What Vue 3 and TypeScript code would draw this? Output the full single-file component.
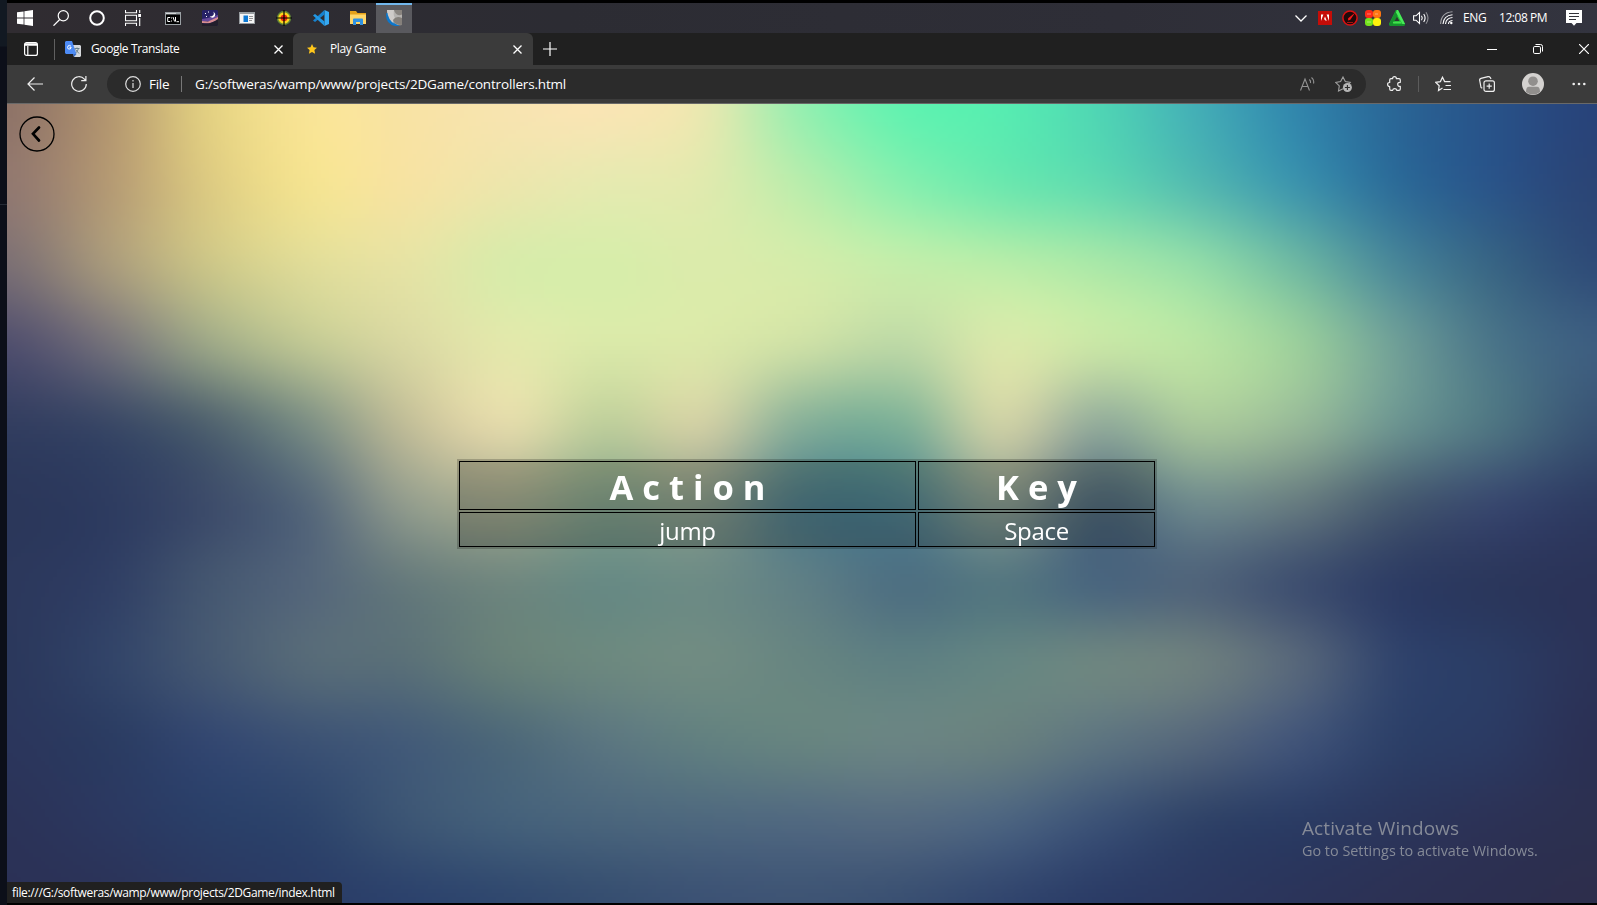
<script setup lang="ts">
import { onMounted, ref } from 'vue'

interface Binding {
  action: string
  key: string
}

const bindings: Binding[] = [{ action: 'jump', key: 'Space' }]

// Colour mesh of the wallpaper: 11 rows of 17 evenly spaced points.
const mesh: string[] = [
  '8f7468 b3966f e3d082 f9e496 f8e3a4 f8e4b0 fae5b4 e9e8b0 96efb0 63f2b0 57edb1 4fd5b4 43aeb6 3186ac 2a6696 285288 28437a',
  '927970 b49a74 dcca82 f4e391 f6e3a2 ede6ac e6eab0 e0eaae b9edac 8aefae 6ee8ae 62d9b0 54bab0 3d94ac 2d6c98 2a5488 2b4576',
  '7c7074 a89a7c cbc588 e0dc98 e6e3a4 d9ebaa d7edaa dbebab d4ecaa c4edaa b9eda9 a9e8a8 93dca8 6fb8a2 4a8798 386484 2f4c78',
  '51506e 74727a 9ca687 c0c794 d9d8a2 e3e8ab dae9a9 dbe8a9 cde0a6 bdd9a6 d9e8aa c8e6a6 b9e4a3 9bce9c 6f9f97 4a7488 3d5e80',
  '333e60 3a4866 50626f 7c8e84 c0bd98 e2daaa bfcf9c cfcfa4 88b099 80b198 ccd0a5 94ad9b a8c79b 96b898 6c9490 4e7482 395374',
  '2b375a 2e3c60 3d4c6a 56687a 929c8d a4ab90 88a48d 8c9f8e 55828c 55858f 8a9e92 56707f 6f8a8c 667b80 465a70 38486e 2e3c62',
  '2c385c 303f64 445670 54667a 667a7c 70877f 688a84 6d8b85 5f7f85 4e7082 557780 4a667e 50647a 3f5070 2e3d64 2b375c 2b3358',
  '2b385c 324468 455872 566a78 5a7078 678079 6c887f 708b82 678581 5f8082 658582 6d8580 6c7e7e 56667a 31446c 2b3c64 2b3358',
  '2b365c 2b3c62 334770 3c5274 435b78 4d6879 5b7680 628080 678480 6a8483 68807f 5d7480 54667b 415478 2d4068 2b3a62 2b3054',
  '2b3358 2b3860 2a3f68 2e456c 3c5574 44607a 4a657c 4e687e 516980 546a80 4c6480 3c5276 304368 2b3c64 2b365c 2c3256 2c3050',
  '2b3156 2b3358 2b3860 2a3c66 2c426c 30486e 364e70 3c5274 3e5474 3a5072 32466e 2b3c66 2b3860 2b345a 2c3154 2c2f50 2d2e4c',
]

const wallpaper = ref<HTMLCanvasElement | null>(null)

// Cubic weights that pass through the mesh points.
function weights(t: number): number[] {
  const t2 = t * t
  const t3 = t2 * t
  return [
    (-t3 + 2 * t2 - t) / 2,
    (3 * t3 - 5 * t2 + 2) / 2,
    (-3 * t3 + 4 * t2 + t) / 2,
    (t3 - t2) / 2,
  ]
}

onMounted(() => {
  const canvas = wallpaper.value
  const ctx = canvas?.getContext('2d')
  if (!canvas || !ctx) return
  const points = mesh.map((row) =>
    row.split(' ').map((hex) => [0, 2, 4].map((i) => parseInt(hex.slice(i, i + 2), 16))),
  )
  const rows = points.length
  const cols = points[0].length
  const clamp = (n: number, max: number) => Math.max(0, Math.min(max, n))
  const image = ctx.createImageData(canvas.width, canvas.height)
  for (let y = 0; y < canvas.height; y++) {
    const gy = (y / (canvas.height - 1)) * (rows - 1)
    const iy = Math.min(Math.floor(gy), rows - 2)
    const wy = weights(gy - iy)
    for (let x = 0; x < canvas.width; x++) {
      const gx = (x / (canvas.width - 1)) * (cols - 1)
      const ix = Math.min(Math.floor(gx), cols - 2)
      const wx = weights(gx - ix)
      const sum = [0, 0, 0]
      for (let j = 0; j < 4; j++) {
        const row = points[clamp(iy + j - 1, rows - 1)]
        for (let i = 0; i < 4; i++) {
          const p = row[clamp(ix + i - 1, cols - 1)]
          const w = wy[j] * wx[i]
          sum[0] += p[0] * w
          sum[1] += p[1] * w
          sum[2] += p[2] * w
        }
      }
      const o = (y * canvas.width + x) * 4
      image.data[o] = sum[0]
      image.data[o + 1] = sum[1]
      image.data[o + 2] = sum[2]
      image.data[o + 3] = 255
    }
  }
  ctx.putImageData(image, 0, 0)
})
</script>

<template>
  <div class="screen">
    <aside class="edge"></aside>
    <div class="desktop">
      <header class="taskbar">
        <div class="task sys">
          <svg width="16" height="16" viewBox="0 0 16 16" fill="#fff"><path d="M0 2.3 6.6 1.4V7.5H0zM7.4 1.2 16 0V7.5H7.4zM0 8.4H6.6V14.6L0 13.7zM7.4 8.4H16V16L7.4 14.8z" /></svg>
        </div>
        <div class="task sys">
          <svg width="16" height="16" viewBox="0 0 16 16" fill="none" stroke="#fff" stroke-width="1.2"><circle cx="10.3" cy="5.8" r="5.1" /><path d="M6.7 9.5.5 15.7" /></svg>
        </div>
        <div class="task sys">
          <svg width="16" height="16" viewBox="0 0 16 16" fill="none" stroke="#fff" stroke-width="2"><circle cx="8" cy="8" r="6.8" /></svg>
        </div>
        <div class="task sys">
          <svg width="16" height="16" viewBox="0 0 16 16" fill="none" stroke="#fff" stroke-width="1.1"><path d="M.5 0V2.8H11.5V0M.5 16V13.2H11.5V16M.5 5.2H11.5V10.8H.5zM14.7 0V3M14.7 8V16" /><path d="M13.2 4H16.200V7H13.200z" fill="#fff" stroke="none" /></svg>
        </div>
        <div class="task">
          <svg width="16" height="13" viewBox="0 0 16 13"><path d="M0 0H16V13H0z" fill="#9aa0a4" /><path d="M1 2.500H15V12H1z" fill="#000" /><path d="M1 1H11V2H1z" fill="#d4d7d9" /><path d="M5.200 5.500H2.700V9.500H5.200M6.500 5.500V6.500M6.500 8.500V9.500M8 5 9.600 9.500M10.500 5V9.500M11.500 9.700H14" fill="none" stroke="#fff" stroke-width="1" /></svg>
        </div>
        <div class="task">
          <svg width="16" height="16" viewBox="0 0 16 16"><path d="M1 0H15L16 1V15L15 16H1L0 15V1z" fill="#272266" /><path d="M0 9Q7 8 16 5V11H0z" fill="#65489a" /><path d="M0 11 6 11.500 16 7V10L7 13.500 0 13z" fill="#d78c91" /><path d="M0 16V13Q8 15 16 9V15L15 16z" fill="#211e2b" /><path d="M11.500 1.500Q13 6.500 7.500 6.500 11 9 13 6 13.800 3.500 11.500 1.500" fill="#fff" /><path d="M3 3H4V4H3zM6 1.500H7V2.500H6zM4 6H5V7H4z" fill="#fff" /></svg>
        </div>
        <div class="task">
          <svg width="16" height="12" viewBox="0 0 16 12"><path d="M0 0H16V12H0z" fill="#989da1" /><path d="M1 2H15V11H1z" fill="#f5f5f5" /><path d="M4.500 3.500H9V10H4.500z" fill="#0b78d4" /><path d="M10 4.500H14M10 6.500H14M10 8.500H13" stroke="#888" stroke-width=".9" /></svg>
        </div>
        <div class="task">
          <svg width="16" height="16" viewBox="0 0 16 16"><circle cx="8" cy="8" r="7.200" fill="#628735" /><circle cx="8" cy="8" r="5.800" fill="#ffd51b" /><circle cx="8" cy="8" r="3.300" fill="#ed2d13" /><path d="M8 0V16M0 8H16" stroke="#000" stroke-width="1.200" /></svg>
        </div>
        <div class="task">
          <svg width="16" height="16" viewBox="0 0 16 16"><path d="M11.500 0 16 2V14L11.500 16z" fill="#36a9f2" /><path d="M11.500 0V4.500L2 12 0 10.500z" fill="#1682cf" /><path d="M0 5.500 2 4 11.500 11.500V16z" fill="#2298e4" /></svg>
        </div>
        <div class="task">
          <svg width="16" height="14" viewBox="0 0 16 14"><path d="M0 0H6L7.500 2H16V13H0z" fill="#e5a21a" /><path d="M0 3.500H16V13H0z" fill="#ffd769" /><path d="M3 14V8.500Q3 7.500 4 7.500H12Q13 7.500 13 8.500V14H10V11H6V14z" fill="#3092e2" /></svg>
        </div>
        <div class="task active">
          <svg width="16" height="16" viewBox="0 0 16 16"><path d="M1 0H16V15Q4 17 1 8z" fill="#b5b2af" /><path d="M0 5Q0 14 9 16H14Q5 13 2 3 0 2 0 5" fill="#0d76ca" /><path d="M1 0H8Q7 5 9 8 5 11 9 14 2 11 1 0" fill="#cfcbc8" /><path d="M8 0H16V4.500Q10 7 8 0" fill="#89847f" /><path d="M7 10Q10 5.500 16 8V15Q8 15 7 10z" fill="#85807b" /></svg>
        </div>

        <div class="tray">
          <svg class="chev" width="12" height="7" viewBox="0 0 12 7" fill="none" stroke="#fff" stroke-width="1.300"><path d="m.5.5 5.500 5.500L11.500.5" /></svg>
          <svg class="adobe" width="14" height="14" viewBox="0 0 14 14"><path d="M0 0H14V14H0z" fill="#c50d08" /><path d="M3 10V3.500H5.400zM11 10V3.500H8.600zM7 5.500 8.700 9.800H7.600L7 8.400H5.900z" fill="#fff" /></svg>
          <svg class="gauge" width="16" height="16" viewBox="0 0 16 16"><circle cx="8" cy="8" r="7.100" fill="#21090a" stroke="#dc1010" stroke-width="1.500" /><path d="M13 2.800 8.300 9.800 6 10.500 6.200 8.200z" fill="#f71818" /><path d="M5 12.500H11" stroke="#a31212" /></svg>
          <svg class="quad" width="16" height="16" viewBox="0 0 16 16"><rect width="8" height="8" rx="3" fill="#fc2b19" /><rect x="8" width="8" height="8" rx="3" fill="#ff7612" /><rect y="8" width="8" height="8" rx="3" fill="#74e31c" /><rect x="8" y="8" width="8" height="8" rx="3" fill="#fff20c" /><path d="M2 4H6M10 4H13M2 12H6" stroke="#fff" stroke-opacity=".4" /></svg>
          <svg class="tri" width="16" height="16" viewBox="0 0 16 16"><path d="M7 0H9L16 14 15 16H1L0 14z" fill="#22bd37" /><path d="M7 0 0 14 1 16H15L16 14H4L9 5z" fill="#16912c" /><path d="M8 6.500 10.500 11H5.500z" fill="#2c3a31" /><path d="M8 0H9L16 14H13.500L7 2.500z" fill="#48eb58" /><path d="M4 12.500H12" stroke="#45df4e" stroke-width="1.500" /></svg>
          <svg class="speaker" width="16" height="14" viewBox="0 0 16 14" fill="none" stroke="#fff" stroke-width="1.100"><path d="M.6 4.800H3L6.500 1.500V12.500L3 9.200H.6z" /><path d="M8.500 4.800Q10 7 8.500 9.200M10.700 3Q13.500 7 10.700 11" /><path d="M13 1.200Q17 7 13 12.800" opacity=".45" /></svg>
          <svg class="wifi" width="13" height="14" viewBox="0 0 13 14" fill="none" stroke="#fff" stroke-width="1.100"><path d="M8.500 13Q8.500 10 12.500 9.500M5.500 13Q6 7 12.500 6.500M3 13Q3.500 4.500 12.500 3.700" /><path d="M.6 13Q1 1.500 12.500.7" opacity=".55" /><circle cx="11.300" cy="12" r="1.200" fill="#fff" stroke="none" /></svg>
          <span class="lang">ENG</span>
          <span class="clock">12:08 PM</span>
          <svg class="note" width="16" height="16" viewBox="0 0 16 16"><path d="M0 0H16V13H10.500L8 15.700 5.500 13H0z" fill="#fff" /><path d="M3 3.500H13M3 6.500H13M3 9.500H10" stroke="#33333a" stroke-width="1.100" /></svg>
        </div>
      </header>

      <nav class="tabs">
        <svg class="tabmenu" width="14" height="14" viewBox="0 0 14 14" fill="none" stroke="#fff" stroke-width="1.200"><rect x=".6" y=".6" width="12.800" height="12.800" rx="2" /><path d="M1 2.500H13" stroke-width="2.500" /><path d="M3.800 4V13" /></svg>
        <i class="vline"></i>
        <div class="tab first">
          <svg width="16" height="16" viewBox="0 0 16 16"><path d="M6 4H15L16 5V15L15 16H9z" fill="#d5d8dc" /><path d="M1 0H7L11.500 13H1L0 12V1z" fill="#4d8bf5" /><path d="M8 13H11.500L9 16z" fill="#3369c6" /><path d="M5.900 5.100Q4.500 3.800 3.200 4.800 1.900 6.500 3.200 7.900 5.800 9 6.200 6.300H4.500" fill="none" stroke="#fff" stroke-width="1" /><path d="M9.500 7.500H14.500M12 6.500V7.500M13.500 7.500Q12.500 11 10.500 12M10.500 8.500 14 12.500" fill="none" stroke="#607985" stroke-width=".9" /></svg>
          <span class="label">Google Translate</span>
          <svg class="x" width="9" height="9" viewBox="0 0 9 9" stroke="#fff" stroke-width="1.300"><path d="m.5.5 8 8M8.500.5l-8 8" /></svg>
        </div>
        <div class="tab current">
          <svg class="fav" width="10" height="10" viewBox="0 0 10 10"><path d="m5 0 1.500 3.200 3.500.5-2.600 2.400.7 3.600L5 8 1.900 9.700l.7-3.600L0 3.700l3.500-.5z" fill="#ffc71b" /></svg>
          <span class="label">Play Game</span>
          <svg class="x" width="9" height="9" viewBox="0 0 9 9" stroke="#fff" stroke-width="1.300"><path d="m.5.5 8 8M8.500.5l-8 8" /></svg>
        </div>
        <svg class="plus" width="14" height="14" viewBox="0 0 14 14" stroke="#fff" stroke-width="1.200"><path d="M7 0V14M0 7H14" /></svg>
        <div class="winctl">
          <svg width="10" height="10" viewBox="0 0 10 10" stroke="#fff"><path d="M0 5.500H10" /></svg>
          <svg width="10" height="10" viewBox="0 0 10 10" fill="none" stroke="#fff"><rect x=".5" y="2.500" width="7" height="7" rx="1.300" /><path d="M2.500.5H7.500Q9.500.5 9.500 2.500V7.500" /></svg>
          <svg width="10" height="10" viewBox="0 0 10 10" stroke="#fff" stroke-width="1.200"><path d="m0 0 10 10M10 0 0 10" /></svg>
        </div>
      </nav>

      <div class="toolbar">
        <svg class="back" width="16" height="14" viewBox="0 0 16 14" fill="none" stroke="#eee" stroke-width="1.200"><path d="M16 7H1M7.500.5 1 7l6.500 6.500" /></svg>
        <svg class="reload" width="16" height="16" viewBox="0 0 16 16" fill="none" stroke="#eee" stroke-width="1.200"><path d="M15.300 8A7.300 7.300 0 1 1 13.400 3.100L14.800 4.600M14.900 0V4.700H10.200" /></svg>
        <div class="omnibox">
          <svg class="info" width="16" height="16" viewBox="0 0 16 16" fill="none" stroke="#ddd" stroke-width="1.200"><circle cx="8" cy="8" r="7.300" /><path d="M8 7V12M8 4V5.500" /></svg>
          <span class="scheme">File</span>
          <i class="divider"></i>
          <span class="url">G:/softweras/wamp/www/projects/2DGame/controllers.html</span>
          <svg class="read" width="15" height="14" viewBox="0 0 15 14" fill="none" stroke="#929292" stroke-width="1.100"><path d="M.5 13.500 5 2 9.500 13.500M2 9.500H8M9.300 2.500Q11 4 10.400 6M11.500.5Q14.500 3 13.500 6.500" /></svg>
          <svg class="addfav" width="17" height="16" viewBox="0 0 17 16"><path d="M8 12.800 3.500 15 4.300 9.900.7 6.400 5.600 5.600 8 1 10.300 5.600 15.300 6.400 14 8" fill="none" stroke="#a0a0a0" stroke-width="1.100" /><circle cx="12.400" cy="11.500" r="4.500" fill="#b5b5b5" /><path d="M12.400 9V14M9.900 11.500H14.900" stroke="#2b2b2b" stroke-width="1.100" /></svg>
        </div>
        <svg class="puzzle" width="14" height="16" viewBox="0 0 14 16" fill="none" stroke="#eee" stroke-width="1.200" stroke-linejoin="round"><path d="M4 2.700H5.600Q5.600.7 7.500.7 9.400.7 9.400 2.700H12Q13.300 2.700 13.300 4V6.300Q10.700 6.200 10.700 8.300 10.700 10.500 13.300 10.300V13Q13.300 14.300 12 14.300H9.700Q9.500 12.600 7.700 12.600 5.900 12.600 5.700 14.300H4Q2.700 14.300 2.700 13V10.500Q.6 10.500.6 8.500.6 6.500 2.700 6.500V4Q2.700 2.700 4 2.700z" /></svg>
        <i class="divider short"></i>
        <svg class="favs" width="16" height="16" viewBox="0 0 16 16" fill="none" stroke="#eee" stroke-width="1.200"><path d="M7.500 12 3.500 14.500 4.200 9.700.7 6.300 5.400 5.600 7.500 1.200 9.600 5.600H15.500M10.500 9.500H16M8.500 13.500H16" /></svg>
        <svg class="coll" width="16" height="16" viewBox="0 0 16 16" fill="none" stroke="#eee" stroke-width="1.200"><rect x="5" y="4.800" width="10.400" height="10.600" rx="2" /><path d="M10.200 7.500V12.700M7.600 10.100H12.800M3.300 12.300 2 11.500.7 4.500Q.3 2.900 2 2.400L9 .7Q10.500.4 11.300 1.600L12 3" /></svg>
        <svg class="avatar" width="22" height="22" viewBox="0 0 22 22"><circle cx="11" cy="11" r="11" fill="#d4d2d0" /><circle cx="11" cy="8.200" r="4.800" fill="#918f8d" /><path d="M4 19Q4 13.800 7 13.800H15Q18 13.800 18 19 11 24 4 19" fill="#918f8d" /></svg>
        <svg class="dots" width="14" height="4" viewBox="0 0 14 4" fill="#eee"><circle cx="1.700" cy="2" r="1.300" /><circle cx="7" cy="2" r="1.300" /><circle cx="12.300" cy="2" r="1.300" /></svg>
      </div>

      <main class="page">
        <canvas ref="wallpaper" class="wallpaper" width="398" height="200"></canvas>
        <svg class="home" width="36" height="36" viewBox="0 0 36 36" fill="none" stroke="#000"><circle cx="18" cy="18" r="17" stroke-width="1.300" /><path d="M20 11.500 14 17.800 20 24.500" stroke-width="2.700" stroke-linecap="round" /></svg>
        <table class="keys">
          <thead>
            <tr><th class="wide">A c t i o n</th><th>K e y</th></tr>
          </thead>
          <tbody>
            <tr v-for="b in bindings" :key="b.action"><td>{{ b.action }}</td><td>{{ b.key }}</td></tr>
          </tbody>
        </table>
        <div class="watermark">
          <div class="big">Activate Windows</div>
          <div class="small">Go to Settings to activate Windows.</div>
        </div>
        <div class="status">file:///G:/softweras/wamp/www/projects/2DGame/index.html</div>
      </main>
    </div>
  </div>
</template>

<style>
body {
  margin: 0;
  background: #000;
  overflow: hidden;
}
</style>

<style scoped>
.screen {
  width: 1597px;
  height: 905px;
  display: flex;
  background: #000;
  overflow: hidden;
  font-family: 'Open Sans', 'Noto Sans', sans-serif;
  color: #fff;
}
svg,
span,
i {
  flex: none;
  display: block;
}
.edge {
  width: 7px;
  flex: none;
  background: linear-gradient(#121922 0 46px, #0c0f19 47px 204px, #252a35 204px 205px, #0c0f19 205px);
}
.desktop {
  width: 1590px;
  padding: 3px 0 2px;
  box-sizing: border-box;
  display: flex;
  flex-direction: column;
}
.taskbar {
  height: 30px;
  display: flex;
  background: linear-gradient(90deg, #302c31, #2c2c33 35%, #2e2e37 70%, #33343f);
}
.task {
  width: 37px;
  display: flex;
  align-items: center;
  justify-content: center;
  box-sizing: border-box;
}
.task.sys {
  width: 36px;
}
.task.sys:nth-child(4) {
  margin-right: 3px;
}
.task.active {
  width: 36px;
  background: #59595e;
  box-shadow: inset 0 2px #72b7ec;
}
.tray {
  margin-left: auto;
  display: flex;
  align-items: center;
  font-size: 12px;
  padding-right: 15px;
}
.adobe { margin-left: 11px; }
.gauge { margin-left: 10px; }
.quad { margin-left: 7px; }
.tri { margin-left: 8px; }
.speaker { margin-left: 8px; }
.wifi { margin-left: 11px; }
.lang {
  margin-left: 10px;
  width: 36px;
  position: relative;
  top: -1px;
  letter-spacing: -0.3px;
}
.clock {
  width: 67px;
  position: relative;
  top: -1px;
  letter-spacing: -0.45px;
  white-space: nowrap;
}
.tabs {
  height: 32px;
  display: flex;
  align-items: center;
  background: #202020;
}
.tabmenu {
  margin-left: 17px;
}
.vline {
  width: 1px;
  height: 21px;
  margin-left: 16px;
  background: #606060;
}
.tab {
  height: 32px;
  display: flex;
  align-items: center;
  box-sizing: border-box;
  font-size: 12px;
}
.tab.first {
  width: 238px;
  padding: 0 10px;
}
.tab .label {
  margin-left: 10px;
  position: relative;
  top: -1px;
  letter-spacing: -0.38px;
}
.tab .x {
  margin-left: auto;
}
.tab.current {
  width: 240px;
  padding: 0 11px 0 14px;
  background: #3b3b3b;
  border-radius: 6px 6px 0 0;
}
.current .label {
  margin-left: 13px;
}
.plus {
  margin-left: 10px;
}
.winctl {
  margin-left: auto;
  padding-right: 8px;
  display: flex;
  gap: 36px;
}
.toolbar {
  height: 39px;
  padding-bottom: 1px;
  box-sizing: border-box;
  display: flex;
  align-items: center;
  background: #3b3b3b;
  border-bottom: 1px solid #696969;
}
.back { margin-left: 20px; }
.reload { margin-left: 28px; }
.omnibox {
  width: 1259px;
  height: 30px;
  margin-left: 20px;
  border-radius: 15px;
  background: #2b2b2b;
  display: flex;
  align-items: center;
  box-sizing: border-box;
  padding: 0 14px 0 18px;
  font-size: 13.5px;
}
.scheme {
  width: 24px;
  margin-left: 8px;
  letter-spacing: -0.3px;
}
.divider {
  width: 1px;
  height: 16px;
  margin-left: 8px;
  background: #777;
}
.url {
  margin-left: 13px;
  letter-spacing: -0.17px;
}
.read { margin-left: auto; }
.addfav { margin-left: 20px; }
.puzzle { margin-left: 21px; }
.divider.short {
  margin-left: 17px;
  background: #5c5c5c;
}
.favs { margin-left: 16px; }
.coll { margin-left: 28px; }
.avatar { margin-left: 27px; }
.dots { margin-left: 28px; }
.page {
  position: relative;
  height: 799px;
  display: flex;
  align-items: flex-start;
}
.wallpaper {
  position: absolute;
  inset: 0;
  width: 100%;
  height: 100%;
}
.home {
  position: relative;
  margin: 12px 0 0 12px;
}
.keys {
  position: relative;
  width: 700px;
  height: 90px;
  margin: 355px 0 0 402px;
  table-layout: fixed;
  border-collapse: separate;
  border-spacing: 2px;
  background: rgba(0, 0, 0, 0.2);
}
.keys th,
.keys td {
  box-sizing: border-box;
  border: 1px solid #000;
  padding: 2px 0 0;
  text-align: center;
}
.keys th {
  height: 49px;
  font-size: 34.5px;
  line-height: 45px;
  font-weight: 700;
}
.keys th.wide {
  width: 457px;
}
.keys td {
  height: 35px;
  font-size: 24px;
  line-height: 31px;
  letter-spacing: -0.3px;
}
.watermark {
  position: absolute;
  left: 1295px;
  top: 711px;
  color: #858a97;
  white-space: nowrap;
}
.big {
  font-size: 19px;
  line-height: 26px;
  letter-spacing: 0.08px;
}
.small {
  font-size: 14.4px;
  line-height: 20px;
}
.status {
  position: absolute;
  left: 0;
  bottom: 0;
  width: 335px;
  height: 21px;
  line-height: 21px;
  box-sizing: border-box;
  padding-left: 5px;
  background: #202020;
  border-radius: 0 4px 0 0;
  font-size: 12px;
  letter-spacing: -0.34px;
  white-space: nowrap;
}
</style>
